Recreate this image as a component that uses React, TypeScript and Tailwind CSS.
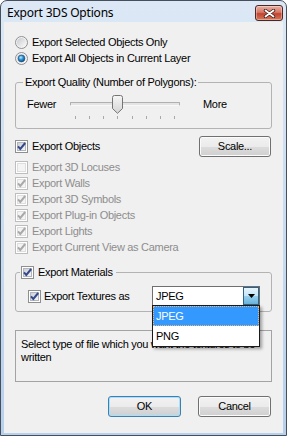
import React from "react";

const CheckBox = ({ checked = false, disabled = false }: { checked?: boolean; disabled?: boolean }) => (
  <svg width="13" height="13" viewBox="0 0 13 13" className="shrink-0">
    <defs>
      <linearGradient id="cbFill" x1="0" y1="0" x2="1" y2="1">
        <stop offset="0" stopColor="#c9cdd3" />
        <stop offset="1" stopColor="#f8f8f8" />
      </linearGradient>
    </defs>
    <rect x="0.5" y="0.5" width="12" height="12" fill="#fff" stroke={disabled ? "#bdbdbd" : "#8e8f8f"} />
    <rect
      x="2.5"
      y="2.5"
      width="8"
      height="8"
      fill={disabled ? "#f4f4f4" : "url(#cbFill)"}
      stroke={disabled ? "#dedede" : "#b2b6bc"}
    />
    {checked && (
      <path
        d="M3 6.3 L5.3 8.9 L10.2 3"
        fill="none"
        stroke={disabled ? "#a9a9a9" : "#35498a"}
        strokeWidth="2"
      />
    )}
  </svg>
);

const Radio = ({ on = false }: { on?: boolean }) => (
  <svg width="13" height="13" viewBox="0 0 13 13" className="shrink-0">
    <defs>
      <linearGradient id="rdFill" x1="0" y1="0" x2="1" y2="1">
        <stop offset="0" stopColor="#c6c9ce" />
        <stop offset="1" stopColor="#fbfbfb" />
      </linearGradient>
      <radialGradient id="rdDot" cx="0.4" cy="0.35" r="0.75">
        <stop offset="0" stopColor="#bdeeff" />
        <stop offset="0.45" stopColor="#2d8fd4" />
        <stop offset="1" stopColor="#0e3c6a" />
      </radialGradient>
    </defs>
    <circle cx="6.5" cy="6.5" r="6" fill="#f3f3f3" stroke="#8e8f8f" />
    <circle cx="6.5" cy="6.5" r="4.6" fill="url(#rdFill)" />
    {on && <circle cx="6.5" cy="6.5" r="3.4" fill="url(#rdDot)" stroke="#1c4d7a" strokeWidth="0.6" />}
  </svg>
);

const Btn = ({ children, primary = false, className = "" }: { children: React.ReactNode; primary?: boolean; className?: string }) => (
  <div
    className={`h-[21px] flex items-center justify-center rounded-[3px] border bg-[linear-gradient(#f2f2f2_0%,#ebebeb_50%,#dddddd_50%,#cfcfcf_100%)] ${
      primary
        ? "border-[#3c7fb1] shadow-[inset_0_0_0_1px_#a6e0fa]"
        : "border-[#707070] shadow-[inset_0_0_0_1px_#fbfbfb]"
    } ${className}`}
  >
    {children}
  </div>
);

const Row = ({ children, disabled = false }: { children: React.ReactNode; disabled?: boolean }) => (
  <div className={`h-[16px] flex items-center gap-[4px] ${disabled ? "text-[#8d8d8d]" : ""}`}>{children}</div>
);

const disabledItems = [
  { label: "Export 3D Locuses", checked: false },
  { label: "Export Walls", checked: true },
  { label: "Export 3D Symbols", checked: true },
  { label: "Export Plug-in Objects", checked: true },
  { label: "Export Lights", checked: true },
  { label: "Export Current View as Camera", checked: true },
];

export default function App() {
  return (
    <div className="w-[287px] h-[436px] flex flex-col rounded-t-[7px] border border-[#46505c] bg-[linear-gradient(#dce8f5,#b7d0ec)] overflow-hidden font-['Liberation_Sans',Arial,sans-serif] text-black">
      {/* title bar */}
      <div className="h-[21px] flex pl-[6px] pr-[3px] shrink-0">
        <div className="flex-1 pt-[4px] text-[12px] leading-[16px] tracking-[-0.2px] font-['Noto_Sans',sans-serif]">
          Export 3DS Options
        </div>
        <div className="mt-[4px] w-[28px] h-[16px] rounded-[3px] border border-[#4e2622] bg-[linear-gradient(#eab0a2_0%,#d57868_45%,#c2432f_55%,#d47a5c_100%)] shadow-[inset_0_0_0_1px_rgba(255,255,255,0.35)] flex items-center justify-center">
          <svg width="13" height="9" viewBox="0 0 13 9">
            <path d="M2.5 1.5 L10.5 7.5 M10.5 1.5 L2.5 7.5" stroke="#3c1c19" strokeWidth="3.4" strokeLinecap="round" />
            <path d="M2.5 1.5 L10.5 7.5 M10.5 1.5 L2.5 7.5" stroke="#ffffff" strokeWidth="1.8" strokeLinecap="round" />
          </svg>
        </div>
      </div>

      {/* client */}
      <div className="flex-1 mx-[3px] mb-[2px] bg-[#f0f0f0] px-[11px] pt-[12px] flex flex-col text-[11px] leading-[13px] tracking-[-0.3px]">
        <Row>
          <Radio />
          Export Selected Objects Only
        </Row>
        <Row>
          <Radio on />
          Export All Objects in Current Layer
        </Row>

        <fieldset className="mt-[10px] min-w-0 border border-[#b3b3b3] rounded-[3px] pt-[5px] pb-[9px]">
          <legend className="ml-[7px] px-[2px] leading-[13px]">Export Quality (Number of Polygons):</legend>
          <div className="flex items-start">
            <div className="w-[54px] pl-[11px] h-[20px] flex items-center">Fewer</div>
            <div className="w-[110px] flex flex-col">
              <div className="relative h-[20px]">
                <div className="absolute left-0 right-0 top-[8px] h-[4px] rounded-[1px] border border-[#b0b0b0] border-b-[#f8f8f8] bg-[#e4e4e4]" />
                <svg className="absolute left-[42px] top-[1px]" width="11" height="19" viewBox="0 0 11 19">
                  <defs>
                    <linearGradient id="thumb" x1="0" y1="0" x2="0" y2="1">
                      <stop offset="0" stopColor="#f6f6f6" />
                      <stop offset="1" stopColor="#d4d4d4" />
                    </linearGradient>
                  </defs>
                  <path
                    d="M0.5 2.5 Q0.5 0.5 2.5 0.5 H8.5 Q10.5 0.5 10.5 2.5 V13.5 L5.5 18.3 L0.5 13.5 Z"
                    fill="url(#thumb)"
                    stroke="#757575"
                  />
                </svg>
              </div>
              <div className="flex justify-between px-[5px] mt-[2px]">
                {Array.from({ length: 8 }).map((_, i) => (
                  <div key={i} className="w-px h-[3px] bg-[#a8a8a8]" />
                ))}
              </div>
            </div>
            <div className="ml-[23px] h-[20px] flex items-center">More</div>
          </div>
        </fieldset>

        <div className="mt-[7px] h-[21px] flex items-center justify-between">
          <div className="flex items-center gap-[4px]">
            <CheckBox checked />
            Export Objects
          </div>
          <Btn className="w-[72px] mr-[1px]">Scale...</Btn>
        </div>

        <div className="mt-[2px] flex flex-col">
          {disabledItems.map((it) => (
            <Row key={it.label} disabled>
              <CheckBox checked={it.checked} disabled />
              {it.label}
            </Row>
          ))}
        </div>

        <fieldset className="mt-[9px] min-w-0 border border-[#b3b3b3] rounded-[3px] pt-[6px] pb-[5px]">
          <legend className="ml-[4px] px-[1px]">
            <span className="h-[16px] flex items-center gap-[4px] pr-[2px]">
              <CheckBox checked />
              Export Materials
            </span>
          </legend>
          <div className="flex items-center pl-[12px]">
            <div className="w-[124px] flex items-center gap-[3px]">
              <CheckBox checked />
              Export Textures as
            </div>
            <div className="relative w-[108px] h-[20px] border border-[#6f6f6f] bg-white flex items-center">
              <span className="flex-1 pl-[3px]">JPEG</span>
              <div className="w-[16px] h-[18px] border border-[#2c628b] bg-[linear-gradient(#e5f4fc_0%,#c4e5f6_50%,#98d1ef_50%,#68b3db_100%)] flex items-center justify-center">
                <svg width="7" height="4" viewBox="0 0 7 4">
                  <path d="M0 0 H7 L3.5 4 Z" fill="#000" />
                </svg>
              </div>
              <div className="absolute z-10 left-[-1px] top-[18px] w-[108px] border border-[#1a1a1a] bg-white shadow-[2px_2px_3px_rgba(0,0,0,0.35)]">
                <div className="h-[20px] bg-[#3399ff] text-white border border-dotted border-[#f4b36a] flex items-center pl-[2px]">
                  JPEG
                </div>
                <div className="h-[20px] flex items-center pl-[3px]">PNG</div>
              </div>
            </div>
          </div>
        </fieldset>

        <div className="mt-[18px] h-[52px] border border-[#a3a3a3] pl-[5px] pt-[7px]">
          Select type of file which you want the textures to be
          <br />
          written
        </div>

        <div className="mt-[14px] flex justify-end gap-[17px] pr-[1px]">
          <Btn primary className="w-[73px]">
            OK
          </Btn>
          <Btn className="w-[73px]">Cancel</Btn>
        </div>
      </div>
    </div>
  );
}
